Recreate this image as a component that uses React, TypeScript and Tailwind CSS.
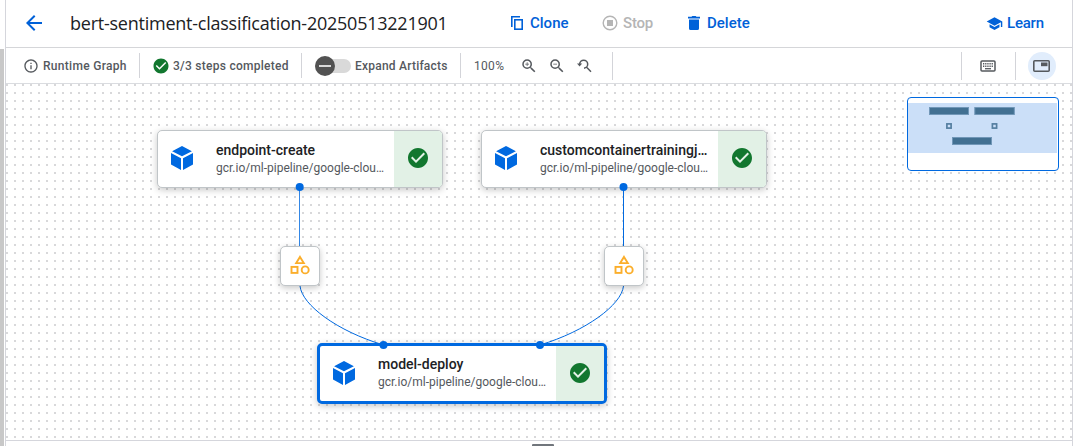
import React from "react";
import { MdArrowBack, MdCheckCircle, MdInfoOutline, MdSchool, MdZoomIn, MdZoomOut } from "react-icons/md";

function Divider({ tall = false }: { tall?: boolean }) {
  return <div className={tall ? "h-7 w-px shrink-0 bg-[#d3d4d9]" : "h-[25px] w-px shrink-0 bg-[#d3d4d9]"} />;
}

function CopyIcon() {
  return (
    <svg className="h-[14px] w-3 shrink-0" viewBox="0 0 12 14" fill="none" stroke="currentColor" strokeWidth="1.6">
      <path d="M0.8 11V0.8H9" />
      <rect x="3.8" y="3.8" width="7.4" height="9.4" />
    </svg>
  );
}

function StopIcon() {
  return (
    <svg className="size-4 shrink-0" viewBox="0 0 16 16">
      <circle cx="8" cy="8" r="6.8" fill="none" stroke="currentColor" strokeWidth="1.4" />
      <rect x="5" y="5" width="6" height="6" fill="currentColor" />
    </svg>
  );
}

function TrashIcon() {
  return (
    <svg className="h-[14px] w-3 shrink-0" viewBox="0 0 12 14" fill="currentColor">
      <path d="M0 .8H3.5L4.3 0H7.7L8.5 .8H12V2.4H0ZM1 3.5H11V12.4Q11 14 9.4 14H2.6Q1 14 1 12.4Z" />
    </svg>
  );
}

function ResetZoomIcon() {
  return (
    <svg className="h-[14px] w-[15px] shrink-0" viewBox="0 0 15 14" fill="none" stroke="currentColor" strokeWidth="1.5">
      <path d="M2.7 5.1A4 4 0 1 1 7 9.2M9.6 8.2L14 12.7" />
      <path d="M0 4.6H5.2L2.6 7.5Z" fill="currentColor" stroke="none" />
    </svg>
  );
}

function KeyboardIcon() {
  return (
    <svg className="h-3 w-4 shrink-0" viewBox="0 0 16 12" fill="none" stroke="currentColor">
      <rect x="1" y="1" width="14" height="10" rx="1" strokeWidth="1.5" />
      <path d="M3 3.8H13M3 6.2H13" strokeWidth="1.4" strokeDasharray="1.3 .85" />
      <path d="M5 8.7H11" strokeWidth="1.3" />
    </svg>
  );
}

function PanelIcon() {
  return (
    <svg className="h-3 w-[17px]" viewBox="0 0 17 12">
      <rect x=".8" y=".8" width="15.4" height="10.4" rx="1" fill="none" stroke="currentColor" strokeWidth="1.6" />
      <path d="M8 2.5H14.5V6.2H8Z" fill="currentColor" />
    </svg>
  );
}

function CubeIcon() {
  return (
    <svg className="h-6 w-[22px] shrink-0" viewBox="0 0 22 24" fill="#0069e0">
      <path d="M11 0L20.9 5.2L11 10.3L1.1 5.2ZM0 7L10 12.3V24L0 18.6ZM22 7L12 12.3V24L22 18.6Z" />
    </svg>
  );
}

function StepNode({ name, place, selected = false }: { name: string; place: string; selected?: boolean }) {
  const frame = selected
    ? "h-[61px] w-[290px] rounded-[5px] border-[3px] border-[#0069e0]"
    : "h-[58px] w-[286px] rounded-[5px] border border-[#c0c5c8]";
  return (
    <div className={`absolute flex overflow-hidden bg-white shadow-[0_2px_7px_rgba(0,0,0,0.22)] ${place} ${frame}`}>
      <div className="flex w-[58px] shrink-0 items-center pb-[2px] pl-[13px]">
        <CubeIcon />
      </div>
      <div className="flex w-[178px] shrink-0 flex-col justify-center pr-2 pb-px">
        <div className="truncate text-[14px] leading-[18px] font-medium text-[#202124]">{name}</div>
        <div className="truncate text-[12px] leading-[18px] text-[#54585d]">gcr.io/ml-pipeline/google-cloud-components</div>
      </div>
      <div className="flex grow items-center justify-center bg-[#e2f1e6] pb-[2px] text-[#12772f]">
        <MdCheckCircle size={24} />
      </div>
    </div>
  );
}

function ArtifactNode({ place }: { place: string }) {
  return (
    <div className={`absolute flex size-10 items-center justify-center rounded-[5px] border border-[#c0c5c8] bg-white pb-[2px] shadow-[0_2px_6px_rgba(0,0,0,0.22)] ${place}`}>
      <svg className="h-5 w-5" viewBox="0 0 20 20" fill="none" stroke="#fbae2b" strokeWidth="1.9">
        <path d="M10 1.9L13.8 8.1H6.2Z" />
        <rect x="1.5" y="11.9" width="6" height="6" />
        <circle cx="15.2" cy="14.9" r="3.5" />
      </svg>
    </div>
  );
}

function MiniMap() {
  return (
    <div className="absolute top-[13px] left-[901px] h-[74px] w-[152px] overflow-hidden rounded-[4px] border border-[#0069e0] bg-white">
      <svg className="h-[72px] w-[150px]" viewBox="0 0 150 72">
        <rect x="0" y="5" width="149" height="50" fill="#cbdff8" />
        <g fill="#427092" stroke="#7197b8" strokeWidth="1">
          <rect x="21.5" y="9.5" width="39" height="7" />
          <rect x="66.8" y="9.5" width="39.5" height="7" />
          <rect x="44.5" y="39.5" width="39" height="7" />
        </g>
        <g fill="#cbdff8" stroke="#557fa1" strokeWidth="1.7">
          <rect x="38.9" y="25.9" width="4.2" height="4.2" />
          <rect x="84.4" y="25.9" width="4.2" height="4.2" />
        </g>
      </svg>
    </div>
  );
}

export default function App() {
  return (
    <div className="flex h-[446px] w-[1074px] overflow-hidden bg-white font-['Roboto',sans-serif]">
      <div className="flex w-[5px] shrink-0 pt-[49px]">
        <div className="w-1 bg-[#c8c8c8]" />
      </div>
      <div className="flex w-[1068px] shrink-0 flex-col border-x border-[#d5d6dc]">
        <header className="flex h-12 shrink-0 items-center border-b border-[#d5d6d9] pb-px text-[#0061d8]">
          <MdArrowBack className="ml-4 shrink-0" size={24} />
          <h1 className="ml-6 w-[440px] shrink-0 font-['Open_Sans',sans-serif] text-[18px] tracking-[-0.24px] whitespace-nowrap text-[#202124]">
            bert-sentiment-classification-20250513221901
          </h1>
          <div className="flex w-[92px] shrink-0 items-center gap-[7px] pl-px text-[15px] font-medium">
            <CopyIcon />
            <span>Clone</span>
          </div>
          <div className="flex w-[86px] shrink-0 items-center gap-[5px] text-[15px] font-medium tracking-[-0.2px] text-[#b5b5b5]">
            <StopIcon />
            <span>Stop</span>
          </div>
          <div className="flex w-[298px] shrink-0 items-center gap-[7px] text-[15px] font-medium">
            <TrashIcon />
            <span>Delete</span>
          </div>
          <div className="flex items-center gap-1 text-[15px] font-medium tracking-[-0.2px]">
            <MdSchool className="shrink-0" size={17} />
            <span>Learn</span>
          </div>
        </header>
        <div className="flex h-9 shrink-0 items-center border-b border-[#dadce0] text-[12px] font-medium tracking-[0.3px] whitespace-nowrap text-[#55595e]">
          <div className="flex w-[133px] shrink-0 items-center gap-1 pl-[17px]">
            <MdInfoOutline size={16} />
            <span>Runtime Graph</span>
          </div>
          <Divider />
          <div className="flex w-[161px] shrink-0 items-center gap-[3px] pl-3">
            <MdCheckCircle className="text-[#12772f]" size={18} />
            <span className="tracking-[0.26px]">3/3 steps completed</span>
          </div>
          <Divider />
          <div className="flex w-[158px] shrink-0 items-center gap-1 pl-[13px]">
            <div className="flex h-[14px] w-9 shrink-0 items-center rounded-full bg-[#d9d9d9]">
              <div className="flex size-5 shrink-0 items-center justify-center rounded-full bg-[#525252]">
                <div className="h-[2px] w-3 bg-[#d9d9d9]" />
              </div>
            </div>
            <span className="tracking-[0.22px]">Expand Artifacts</span>
          </div>
          <Divider />
          <div className="flex w-[151px] shrink-0 items-center pl-[13px]">
            <span className="w-[46px] font-normal">100%</span>
            <MdZoomIn className="shrink-0" size={18} />
            <MdZoomOut className="ml-[10px] shrink-0" size={18} />
            <span className="ml-[11px]"><ResetZoomIcon /></span>
          </div>
          <Divider tall />
          <div className="grow" />
          <Divider tall />
          <div className="flex w-[53px] shrink-0 pl-[18px]"><KeyboardIcon /></div>
          <Divider tall />
          <div className="flex w-[56px] shrink-0 pl-3">
            <div className="flex size-7 items-center justify-center rounded-full bg-[#e1edfc] pr-px"><PanelIcon /></div>
          </div>
        </div>
        <main className="relative h-[356px] shrink-0 bg-white">
          <svg className="block h-[356px] w-[1066px]">
            <defs>
              <pattern id="dots" width="8" height="8" patternUnits="userSpaceOnUse">
                <rect width="8" height="8" fill="#fff" />
                <rect width="2" height="2" fill="#d8d8da" />
              </pattern>
            </defs>
            <rect width="1066" height="356" fill="url(#dots)" />
          </svg>
          <StepNode name="endpoint-create" place="left-[151px] top-[46px]" />
          <StepNode name="customcontainertrainingjob-run" place="left-[475px] top-[46px]" />
          <StepNode name="model-deploy" place="left-[311px] top-[259px]" selected />
          <svg className="absolute inset-0 h-[356px] w-[1066px]" fill="none" stroke="#0069e0" strokeWidth="1">
            <path d="M293.5 103V162" strokeOpacity="0.8" />
            <path d="M617.5 103V162M294 202C296 221 331 247 377.5 261M617.5 202C615.5 221 580 247 534 261" />
            <g fill="#0069e0" stroke="none">
              <circle cx="293.7" cy="103" r="4" />
              <circle cx="617.5" cy="103" r="4" />
              <circle cx="377.5" cy="261" r="4" />
              <circle cx="534" cy="261" r="4" />
            </g>
          </svg>
          <ArtifactNode place="left-[274px] top-[162px]" />
          <ArtifactNode place="left-[598px] top-[162px]" />
          <MiniMap />
        </main>
        <footer className="flex grow items-end border-t border-[#d5d6dc] bg-white pl-[526px]">
          <div className="h-[2px] w-[22px] rounded-t-[1px] bg-[#71767c]" />
        </footer>
      </div>
    </div>
  );
}
